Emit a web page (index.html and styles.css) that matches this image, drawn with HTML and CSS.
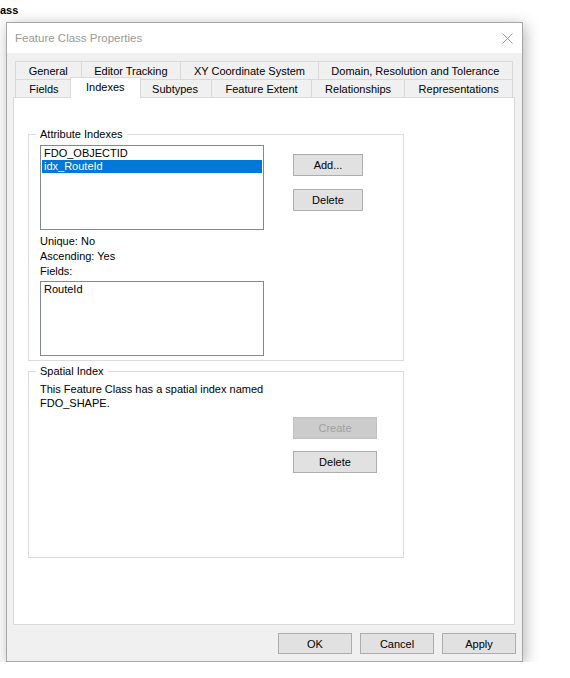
FILE: index.html
```html
<!DOCTYPE html>
<html lang="en">
<head>
  <meta charset="UTF-8">
  <meta name="viewport" content="width=device-width, initial-scale=1.0">
  <title>Feature Class Properties</title>
  <link rel="stylesheet" href="styles.css">
</head>
<body>
  <div class="backdrop-title">ass</div>

  <div class="dialog">
    <div class="titlebar">
      <span class="title">Feature Class Properties</span>
      <svg class="close" width="11" height="11" viewBox="0 0 11 11">
        <path d="M0.5 0.5 L10.5 10.5 M10.5 0.5 L0.5 10.5" stroke="#9a9a9a" stroke-width="1" fill="none"/>
      </svg>
    </div>

    <div class="dialog-body">
      <div class="tabs">
        <div class="tab-row">
          <div class="tab">General</div>
          <div class="tab">Editor Tracking</div>
          <div class="tab">XY Coordinate System</div>
          <div class="tab">Domain, Resolution and Tolerance</div>
        </div>
        <div class="tab-row">
          <div class="tab">Fields</div>
          <div class="tab active">Indexes</div>
          <div class="tab">Subtypes</div>
          <div class="tab">Feature Extent</div>
          <div class="tab">Relationships</div>
          <div class="tab">Representations</div>
        </div>
      </div>

      <div class="tab-page">
        <fieldset class="group group-attr">
          <legend>Attribute Indexes</legend>
          <div class="attr-layout">
            <div class="attr-left">
              <div class="listbox list-indexes">
                <div class="item">FDO_OBJECTID</div>
                <div class="item selected">idx_RouteId</div>
              </div>
              <div class="info-lines">
                <div class="info">Unique: No</div>
                <div class="info">Ascending: Yes</div>
                <div class="info">Fields:</div>
              </div>
              <div class="listbox list-fields">
                <div class="item">RouteId</div>
              </div>
            </div>
            <div class="attr-buttons">
              <button class="btn btn-attr">Add...</button>
              <button class="btn btn-attr">Delete</button>
            </div>
          </div>
        </fieldset>

        <fieldset class="group group-spatial">
          <legend>Spatial Index</legend>
          <div class="spatial-text">
            This Feature Class has a spatial index named<br>
            FDO_SHAPE.
          </div>
          <div class="spatial-buttons">
            <button class="btn btn-spatial" disabled>Create</button>
            <button class="btn btn-spatial">Delete</button>
          </div>
        </fieldset>
      </div>

      <div class="dialog-buttons">
        <button class="btn btn-dialog">OK</button>
        <button class="btn btn-dialog">Cancel</button>
        <button class="btn btn-dialog">Apply</button>
      </div>
    </div>
  </div>
</body>
</html>
```

FILE: styles.css
```css
body {
  margin: 0;
  background: #fff;
  font-family: "Segoe UI", "Liberation Sans", Arial, sans-serif;
  font-size: 11px;
  color: #000;
}

/* window behind the dialog, only its caption edge shows */
.backdrop-title {
  height: 22px;
  font-size: 11px;
  font-weight: bold;
  line-height: 20px;
}

.dialog {
  width: 517px;
  margin-left: 6px;
  box-sizing: border-box;
  border: 1px solid #a6a6a6;
  background: #f0f0f0;
  box-shadow: 2px 3px 14px rgba(0, 0, 0, 0.3);
}

.titlebar {
  height: 30px;
  background: #fff;
  display: flex;
  align-items: center;
  justify-content: space-between;
  padding: 0 9px 0 8px;
}
.title {
  color: #999;
  font-size: 11.5px;
}
.close {
  display: block;
}

.dialog-body {
  padding: 8px 7px 7px 6px;
}

/* two-row tab strip */
.tab-row {
  display: flex;
  height: 18px;
  margin: 0 2px;
}
.tab {
  flex: 1 1 auto;
  padding: 0 6px;
  margin-left: -1px;
  border: 1px solid #d9d9d9;
  border-bottom: none;
  background: #f0f0f0;
  line-height: 18px;
  text-align: center;
  white-space: nowrap;
}
.tab:first-child {
  margin-left: 0;
}
/* selected tab is inflated over its neighbours and the page border */
.tab.active {
  align-self: flex-start;
  height: 21px;
  margin: -2px -2px 0 -3px;
  padding: 0 8px;
  box-sizing: border-box;
  background: #fff;
  position: relative;
  z-index: 1;
}

.tab-page {
  height: 528px;
  box-sizing: border-box;
  padding: 29px 0 0 14px;
  background: #fff;
  border: 1px solid #d9d9d9;
}

.group {
  width: 376px;
  min-width: 0;
  box-sizing: border-box;
  margin: 0;
  padding: 4px 11px 4px 11px;
  border: 1px solid #dcdcdc;
}
.group legend {
  padding: 0 4px;
  margin-left: -4px;
  line-height: 14px;
}

.attr-layout {
  display: grid;
  grid-template-columns: 224px auto;
  column-gap: 29px;
}

.listbox {
  width: 224px;
  box-sizing: border-box;
  padding: 1px;
  border: 1px solid #828790;
  background: #fff;
}
.list-indexes {
  height: 85px;
}
.list-fields {
  height: 75px;
}
.item {
  line-height: 13px;
  padding-left: 2px;
}
.item.selected {
  background: #0078d7;
  color: #fff;
}

.info-lines {
  margin: 4px 0 2px;
}
.info {
  line-height: 15px;
}

.attr-buttons {
  display: flex;
  flex-direction: column;
  gap: 13px;
  padding-top: 9px;
}

.btn {
  box-sizing: border-box;
  padding: 0;
  border: 1px solid #adadad;
  background: #e1e1e1;
  color: #000;
  font: inherit;
}
.btn:disabled {
  border-color: #bfbfbf;
  background: #cccccc;
  color: #a0a0a0;
}
.btn-attr {
  width: 70px;
  height: 22px;
}

.group-spatial {
  margin-top: 3px;
  padding-bottom: 84px;
}
.spatial-text {
  line-height: 14px;
}
.spatial-buttons {
  display: flex;
  flex-direction: column;
  gap: 12px;
  margin: 7px 0 0 253px;
}
.btn-spatial {
  width: 84px;
  height: 22px;
}

.dialog-buttons {
  display: flex;
  justify-content: flex-end;
  gap: 8px;
  margin: 8px -1px 0 0;
}
.btn-dialog {
  width: 74px;
  height: 21px;
}
```
